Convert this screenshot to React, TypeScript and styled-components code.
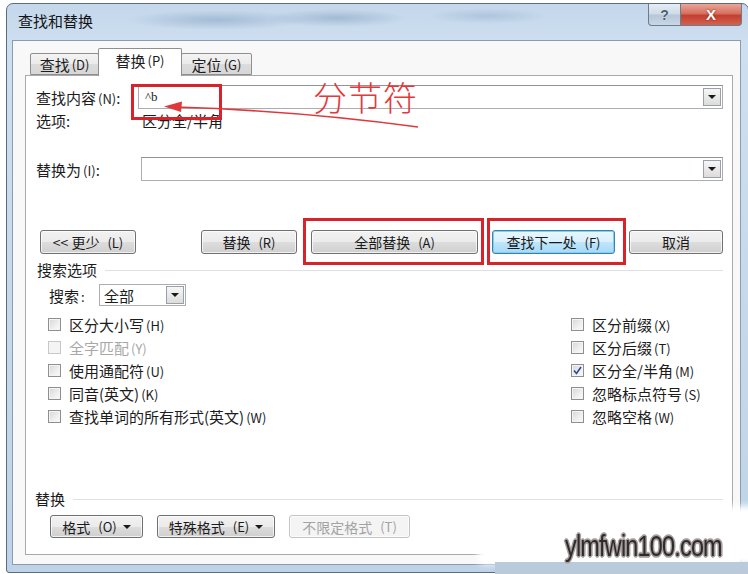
import styled, { createGlobalStyle } from "styled-components";

const GlobalStyle = createGlobalStyle`
  html, body {
    margin: 0;
    padding: 0;
    background: #ffffff;
  }
  body {
    width: 748px;
    height: 574px;
    overflow: hidden;
    font-family: "Noto Sans CJK SC", "Microsoft YaHei", sans-serif;
    color: #1c1c1c;
  }
`;

const Page = styled.div`
  position: relative;
  width: 748px;
  height: 574px;
  overflow: hidden;
  padding: 3px 0 0 6px;
  box-sizing: border-box;
`;

const Frame = styled.div`
  width: 743px;
  height: 570px;
  box-sizing: border-box;
  border: 1px solid #5b6c7e;
  border-radius: 7px 7px 3px 3px;
  background:
    radial-gradient(ellipse 90px 10px at 210px 16px, rgba(120, 150, 185, 0.45), transparent),
    radial-gradient(ellipse 70px 9px at 330px 14px, rgba(110, 140, 175, 0.4), transparent),
    radial-gradient(ellipse 60px 8px at 480px 12px, rgba(120, 150, 185, 0.3), transparent),
    linear-gradient(180deg, #c4d7eb 0px, #cddff0 40px, #bfd3e8 100%);
  display: flex;
  flex-direction: column;
`;

const TitleBar = styled.div`
  height: 36px;
  display: flex;
  align-items: flex-start;
  padding-left: 11px;
`;

const Title = styled.div`
  margin-top: 7px;
  font-size: 15px;
  line-height: 20px;
  color: #141414;
`;

const CaptionGroup = styled.div`
  margin-left: auto;
  margin-right: 6px;
  display: flex;
`;

const CaptionButton = styled.div<{ $close?: boolean }>`
  width: ${(p) => (p.$close ? 61 : 33)}px;
  height: 22px;
  box-sizing: border-box;
  border: 1px solid #6b7c8f;
  border-top: none;
  border-left: ${(p) => (p.$close ? "none" : "1px solid #6b7c8f")};
  border-radius: ${(p) => (p.$close ? "0 0 4px 0" : "0 0 0 4px")};
  background: ${(p) =>
    p.$close
      ? "linear-gradient(180deg, #e9a697 0%, #d7705f 45%, #c2402f 55%, #d4624f 100%)"
      : "linear-gradient(180deg, #e6edf5 0%, #cfdbe8 45%, #b6c7d9 55%, #c9d7e6 100%)"};
  display: flex;
  align-items: center;
  justify-content: center;
  font-family: "Liberation Sans", sans-serif;
  font-weight: bold;
  font-size: ${(p) => (p.$close ? 15 : 14)}px;
  color: ${(p) => (p.$close ? "#ffffff" : "#4c5d70")};
  text-shadow: ${(p) => (p.$close ? "0 0 2px #7a1a10" : "0 0 1px #ffffff")};
`;

const Client = styled.div`
  margin: 0 7px 7px 5px;
  height: 525px;
  box-sizing: border-box;
  border: 1px solid #8c9cae;
  background: #f8f8f8;
  padding: 7px 8px 0 12px;
`;

const TabStrip = styled.div`
  height: 28px;
  margin-bottom: -1px;
  padding-left: 5px;
  display: flex;
  align-items: flex-end;
  position: relative;
  z-index: 1;
`;

const Tab = styled.div<{ $active?: boolean; $w: number }>`
  width: ${(p) => p.$w}px;
  height: ${(p) => (p.$active ? 28 : 22)}px;
  margin: ${(p) => (p.$active ? "0 -1px" : "0 0 1px 0")};
  box-sizing: border-box;
  border: 1px solid #8e8f8f;
  border-bottom: ${(p) => (p.$active ? "none" : "1px solid #8e8f8f")};
  border-radius: 2px 2px 0 0;
  background: ${(p) =>
    p.$active ? "#ffffff" : "linear-gradient(180deg, #f3f3f3 0%, #ebebeb 50%, #dcdcdc 51%, #d7d7d7 100%)"};
  position: relative;
  z-index: ${(p) => (p.$active ? 2 : 1)};
  display: flex;
  align-items: center;
  justify-content: center;
  font-size: 15px;
  padding-bottom: ${(p) => (p.$active ? 4 : 0)}px;
`;

const Key = styled.span`
  font-size: 13px;
  margin-left: 2px;
`;

const Panel = styled.div`
  width: 708px;
  height: 480px;
  box-sizing: border-box;
  border: 1px solid #a9a9a9;
  background: #ffffff;
  padding: 0 9px 0 0;
  display: flex;
  flex-direction: column;
  font-size: 15px;
`;

const FieldRow = styled.div<{ $top: number }>`
  margin-top: ${(p) => p.$top}px;
  height: 24px;
  display: flex;
  align-items: center;
  padding-left: 10px;
`;

const FieldLabel = styled.div<{ $w: number }>`
  width: ${(p) => p.$w}px;
  flex-shrink: 0;
  white-space: nowrap;
`;

const ComboInput = styled.div`
  flex: 1;
  height: 24px;
  box-sizing: border-box;
  border: 1px solid #abadb3;
  border-top-color: #8f9298;
  background: #ffffff;
  display: flex;
  align-items: center;
  padding: 0 1px 0 6px;
`;

const InputText = styled.span`
  flex: 1;
  font-family: "Liberation Serif", serif;
  font-size: 13px;
`;

const DropButton = styled.div`
  width: 18px;
  height: 18px;
  box-sizing: border-box;
  border: 1px solid #9aa0a7;
  background: linear-gradient(180deg, #f6f6f6, #dcdcdc);
  display: flex;
  align-items: center;
  justify-content: center;
  flex-shrink: 0;
`;

const DownTriangle = styled.span<{ $color?: string }>`
  width: 0;
  height: 0;
  border-left: 4px solid transparent;
  border-right: 4px solid transparent;
  border-top: 4px solid ${(p) => p.$color ?? "#1a1a1a"};
`;

const OptionsRow = styled.div`
  margin-top: 4px;
  height: 16px;
  display: flex;
  align-items: center;
  padding-left: 10px;
  line-height: 16px;
`;

const ButtonRow = styled.div<{ $top: number; $left: number }>`
  margin-top: ${(p) => p.$top}px;
  padding-left: ${(p) => p.$left}px;
  display: flex;
  align-items: center;
  gap: 14px;
`;

const PushButton = styled.div<{ $w: number; $h?: number; $default?: boolean; $disabled?: boolean }>`
  width: ${(p) => p.$w}px;
  height: ${(p) => p.$h ?? 24}px;
  box-sizing: border-box;
  border: 1px solid ${(p) => (p.$default ? "#3c7fb1" : p.$disabled ? "#c4c4c4" : "#707070")};
  border-radius: 3px;
  background: ${(p) =>
    p.$default
      ? "linear-gradient(180deg, #eaf6fd 0%, #d9f0fc 50%, #bee6fd 51%, #a7d9f5 100%)"
      : p.$disabled
      ? "#f4f4f4"
      : "linear-gradient(180deg, #f2f2f2 0%, #ebebeb 50%, #dddddd 51%, #cfcfcf 100%)"};
  box-shadow: ${(p) => (p.$default ? "inset 0 0 0 1px #7fd0f5" : "inset 0 0 0 1px rgba(255,255,255,0.7)")};
  color: ${(p) => (p.$disabled ? "#a3a3a3" : "#1a1a1a")};
  display: flex;
  align-items: center;
  justify-content: center;
  gap: 6px;
  font-size: 14px;
  white-space: nowrap;
`;

const Spacer = styled.div`
  flex: 1;
`;

const SectionHeader = styled.div<{ $top: number; $left: number }>`
  margin-top: ${(p) => p.$top}px;
  height: 16px;
  padding-left: ${(p) => p.$left}px;
  display: flex;
  align-items: center;
  gap: 8px;
  line-height: 16px;

  &::after {
    content: "";
    flex: 1;
    height: 1px;
    background: #dce1e6;
  }
`;

const SearchRow = styled.div`
  margin-top: 6px;
  height: 22px;
  padding-left: 23px;
  display: flex;
  align-items: center;
`;

const SelectBox = styled.div`
  width: 87px;
  height: 22px;
  box-sizing: border-box;
  border: 1px solid #abadb3;
  background: #ffffff;
  display: flex;
  align-items: center;
  padding: 0 1px 0 4px;
  margin-left: 3px;
`;

const SelectValue = styled.span`
  flex: 1;
`;

const CheckGrid = styled.div`
  margin-top: 7px;
  padding-left: 22px;
  display: grid;
  grid-template-columns: 523px 1fr;
  grid-auto-flow: column;
  grid-template-rows: repeat(5, 23px);
`;

const CheckItem = styled.div<{ $disabled?: boolean }>`
  display: flex;
  align-items: center;
  gap: 8px;
  color: ${(p) => (p.$disabled ? "#a8a8a8" : "#1c1c1c")};
  white-space: nowrap;
`;

const CheckBox = styled.span<{ $disabled?: boolean }>`
  width: 13px;
  height: 13px;
  box-sizing: border-box;
  border: 1px solid ${(p) => (p.$disabled ? "#c8c8c8" : "#8e8f8f")};
  background: ${(p) =>
    p.$disabled ? "#f4f4f4" : "linear-gradient(135deg, #d6d6d6 0%, #efefef 60%, #fbfbfb 100%)"};
  box-shadow: inset 0 0 0 1px #f4f4f4;
  display: flex;
  align-items: center;
  justify-content: center;
  flex-shrink: 0;
`;

const Overlay = styled.div<{ $x: number; $y: number; $w: number; $h: number }>`
  position: absolute;
  left: ${(p) => p.$x}px;
  top: ${(p) => p.$y}px;
  width: ${(p) => p.$w}px;
  height: ${(p) => p.$h}px;
  box-sizing: border-box;
`;

const RedBox = styled(Overlay)`
  border: 3px solid #d8232a;
`;

const Callout = styled.div`
  position: absolute;
  left: 313px;
  top: 75px;
  font-size: 34px;
  line-height: 44px;
  font-weight: 300;
  color: #e23a3b;
  letter-spacing: 1px;
`;

const WatermarkGlow = styled(Overlay)`
  background: #ffffff;
  filter: blur(3px);
  border-radius: 18px 0 0 6px;
`;

const WatermarkBand = styled(Overlay)`
  background: #b9cadb;
`;

const WatermarkText = styled.div`
  position: absolute;
  left: 565px;
  top: 528px;
  font-family: "Liberation Sans", sans-serif;
  font-size: 30px;
  line-height: 36px;
  letter-spacing: -1px;
  white-space: nowrap;
  color: #2f2b2b;
  transform: scaleX(0.78);
  transform-origin: left center;
  text-shadow:
    1px 1px 0 #a49c9c, -1px -1px 0 #a49c9c, 1px -1px 0 #a49c9c, -1px 1px 0 #a49c9c,
    2px 0 0 #b6afaf, -2px 0 0 #b6afaf, 0 2px 0 #b6afaf, 0 -2px 0 #b6afaf;
`;

const leftChecks = [
  { text: "区分大小写", key: "H" },
  { text: "全字匹配", key: "Y", disabled: true },
  { text: "使用通配符", key: "U" },
  { text: "同音(英文)", key: "K" },
  { text: "查找单词的所有形式(英文)", key: "W" },
];

const rightChecks = [
  { text: "区分前缀", key: "X" },
  { text: "区分后缀", key: "T" },
  { text: "区分全/半角", key: "M", checked: true },
  { text: "忽略标点符号", key: "S" },
  { text: "忽略空格", key: "W" },
];

function Check({ text, keyName, checked, disabled }: { text: string; keyName: string; checked?: boolean; disabled?: boolean }) {
  return (
    <CheckItem $disabled={disabled}>
      <CheckBox $disabled={disabled}>
        {checked && (
          <svg width="9" height="9" viewBox="0 0 9 9">
            <path d="M1 4.5 L3.5 7.5 L8 1" fill="none" stroke="#2b4a9a" strokeWidth="1.6" />
          </svg>
        )}
      </CheckBox>
      <span>
        {text}
        <Key>({keyName})</Key>
      </span>
    </CheckItem>
  );
}

export default function App() {
  return (
    <Page>
      <GlobalStyle />
      <Frame>
        <TitleBar>
          <Title>查找和替换</Title>
          <CaptionGroup>
            <CaptionButton>?</CaptionButton>
            <CaptionButton $close>X</CaptionButton>
          </CaptionGroup>
        </TitleBar>

        <Client>
          <TabStrip>
            <Tab $w={69}>
              查找<Key>(D)</Key>
            </Tab>
            <Tab $w={84} $active>
              替换<Key>(P)</Key>
            </Tab>
            <Tab $w={71}>
              定位<Key>(G)</Key>
            </Tab>
          </TabStrip>

          <Panel>
            <FieldRow $top={9}>
              <FieldLabel $w={102}>
                查找内容<Key>(N)</Key>:
              </FieldLabel>
              <ComboInput>
                <InputText>^b</InputText>
                <DropButton>
                  <DownTriangle />
                </DropButton>
              </ComboInput>
            </FieldRow>

            <OptionsRow>
              <FieldLabel $w={106}>选项:</FieldLabel>
              <span>区分全/半角</span>
            </OptionsRow>

            <FieldRow $top={28}>
              <FieldLabel $w={105}>
                替换为<Key>(I)</Key>:
              </FieldLabel>
              <ComboInput>
                <InputText />
                <DropButton>
                  <DownTriangle />
                </DropButton>
              </ComboInput>
            </FieldRow>

            <ButtonRow $top={49} $left={14}>
              <PushButton $w={96}>
                &lt;&lt; 更少<Key>(L)</Key>
              </PushButton>
              <Spacer />
              <PushButton $w={96}>
                替换<Key>(R)</Key>
              </PushButton>
              <PushButton $w={167}>
                全部替换<Key>(A)</Key>
              </PushButton>
              <PushButton $w={123} $default>
                查找下一处<Key>(F)</Key>
              </PushButton>
              <PushButton $w={94}>取消</PushButton>
            </ButtonRow>

            <SectionHeader $top={8} $left={11}>
              搜索选项
            </SectionHeader>

            <SearchRow>
              <FieldLabel $w={47}>
                搜索<Key>:</Key>
              </FieldLabel>
              <SelectBox>
                <SelectValue>全部</SelectValue>
                <DropButton>
                  <DownTriangle />
                </DropButton>
              </SelectBox>
            </SearchRow>

            <CheckGrid>
              {leftChecks.map((c) => (
                <Check key={c.text} text={c.text} keyName={c.key} disabled={c.disabled} />
              ))}
              {rightChecks.map((c) => (
                <Check key={c.text} text={c.text} keyName={c.key} checked={c.checked} />
              ))}
            </CheckGrid>

            <SectionHeader $top={63} $left={9}>
              替换
            </SectionHeader>

            <ButtonRow $top={8} $left={24}>
              <PushButton $w={93} $h={23}>
                格式<Key>(O)</Key>
                <DownTriangle />
              </PushButton>
              <PushButton $w={118} $h={23}>
                特殊格式<Key>(E)</Key>
                <DownTriangle />
              </PushButton>
              <PushButton $w={121} $h={23} $disabled>
                不限定格式<Key>(T)</Key>
              </PushButton>
            </ButtonRow>
          </Panel>
        </Client>
      </Frame>

      {/* red markup drawn over the dialog */}
      <RedBox $x={131} $y={84} $w={91} $h={36} />
      <RedBox $x={303} $y={218} $w={181} $h={47} />
      <RedBox $x={487} $y={218} $w={139} $h={47} />
      <Callout>分节符</Callout>
      <Overlay $x={150} $y={95} $w={290} $h={45}>
        <svg width="290" height="45" viewBox="150 95 290 45">
          <path d="M418 127 Q 300 111 176 107" fill="none" stroke="#e0383a" strokeWidth="1.6" />
          <path d="M164 106.5 L182 101.5 L181 112 Z" fill="#e0383a" />
        </svg>
      </Overlay>

      {/* site watermark */}
      <WatermarkGlow $x={478} $y={506} $w={280} $h={58} />
      <WatermarkBand $x={495} $y={562} $w={253} $h={12} />
      <WatermarkText>ylmfwin100.com</WatermarkText>
    </Page>
  );
}
